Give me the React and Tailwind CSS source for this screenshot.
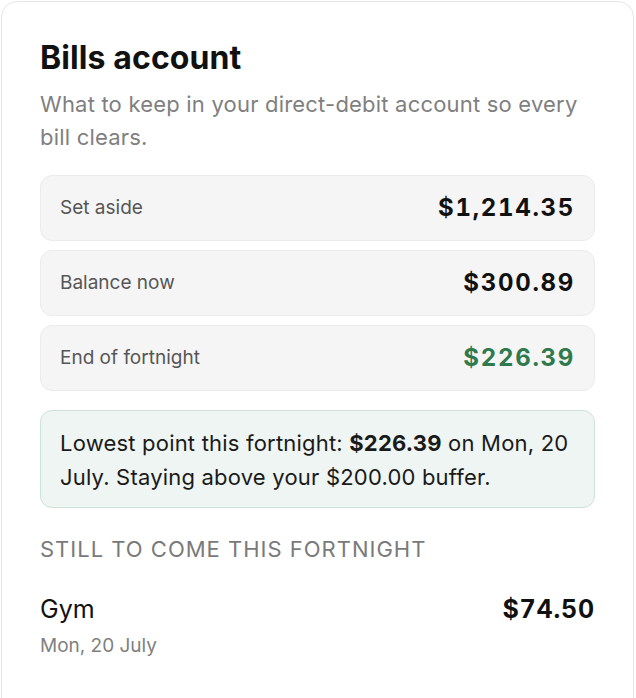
import React from 'react';

const rows = [
  { label: 'Set aside', value: '$1,214.35', tone: 'text-[#111111]' },
  { label: 'Balance now', value: '$300.89', tone: 'text-[#111111]' },
  { label: 'End of fortnight', value: '$226.39', tone: 'text-[#2e7a4c]' },
];

export default function App() {
  return (
    <div className="min-h-[698px] bg-white pl-px pt-px" style={{ fontFamily: 'Inter, "Noto Sans", sans-serif' }}>
      <div className="w-[633px] min-h-[720px] rounded-2xl border border-[#e6e6e6] bg-white px-[38px] pt-[36px]">
        {/* Header */}
        <h1 className="text-[32px] font-bold leading-[40px] text-[#111111] tracking-[0.1px]">Bills account</h1>
        <p className="mt-[10px] text-[22px] leading-[33px] tracking-[0.2px] text-[#7f7f7f]">
          What to keep in your direct-debit account so every bill clears.
        </p>

        {/* Summary rows */}
        <div className="mt-[21px] flex flex-col gap-[9px]">
          {rows.map(r => (
            <div key={r.label} className="flex h-[66px] items-center justify-between rounded-xl border border-[#ebebeb] bg-[#f5f5f5] pl-[19px] pr-[19px]">
              <span className="text-[19px] text-[#565656]">{r.label}</span>
              <span className={`text-[24px] font-bold tabular-nums tracking-[1.7px] ${r.tone}`}>{r.value}</span>
            </div>
          ))}
        </div>

        {/* Lowest point note */}
        <div className="mt-[19px] rounded-xl border border-[#cfe2d6] bg-[#eef5f2] pl-[19px] pr-[16px] pt-[15px] pb-[13px] text-[22px] leading-[34px] tracking-[0.2px] text-[#1a1a1a]">
          Lowest point this fortnight: <span className="font-bold">$226.39</span> on Mon, 20 July. Staying above your $200.00 buffer.
        </div>

        {/* Upcoming */}
        <div className="mt-[27px] text-[22px] leading-[28px] uppercase tracking-[1px] text-[#7a7a7a]">Still to come this fortnight</div>
        <div className="mt-[31px] flex items-start justify-between">
          <div>
            <div className="text-[25px] leading-[30px] text-[#111111]">Gym</div>
            <div className="mt-[10px] text-[19px] leading-[24px] text-[#7f7f7f]">Mon, 20 July</div>
          </div>
          <div className="text-[25px] leading-[30px] font-bold tabular-nums tracking-[0.8px] text-[#111111]">$74.50</div>
        </div>
      </div>
    </div>
  );
}
